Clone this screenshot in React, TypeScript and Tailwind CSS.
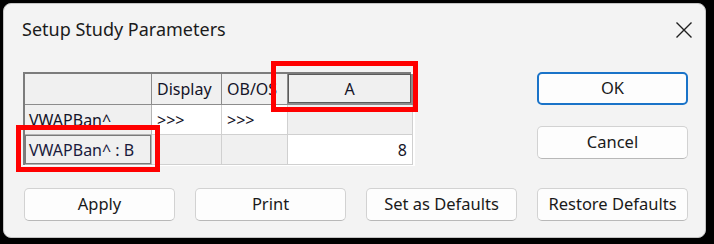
import React from "react";

const font = { fontFamily: '"Noto Sans", "Open Sans", Arial, sans-serif' };

function Btn({ label, primary }: { label: string; primary?: boolean }) {
  return (
    <div
      className={
        "w-[151px] h-[33px] flex items-center justify-center rounded-[5px] bg-[#fdfdfd] text-[16.5px] text-[#1a1a1a] " +
        (primary
          ? "border-2 border-[#1a73c8]"
          : "border border-[#d2d2d2] border-b-[#b8b8b8]")
      }
    >
      {label}
    </div>
  );
}

export default function App() {
  const cell = "border-r border-b flex items-center text-[16px] text-[#141428] overflow-hidden whitespace-nowrap";
  return (
    <div className="w-[714px] h-[244px] bg-black pt-[3px] pl-[3px]" style={font}>
      <div className="relative flex flex-col w-[703px] h-[235px] bg-[#f3f3f3] rounded-[8px] border border-[#c4c4c4]">
        {/* title bar */}
        <div className="flex items-center justify-between h-[50px] pl-[18px] pr-[12px]">
          <span className="text-[18px] text-[#1b1b1b]">Setup Study Parameters</span>
          <svg width="18" height="18" viewBox="0 0 18 18" className="mt-[1px]">
            <path d="M1.5 1.5 L16.5 16.5 M16.5 1.5 L1.5 16.5" stroke="#1f1f1f" strokeWidth="1.4" />
          </svg>
        </div>
        {/* top row */}
        <div className="flex items-start pl-[19px] mt-[18px]">
          <div className="w-[392px] h-[94px] bg-white">
            <div className="grid grid-cols-[127px_70px_66px_125px] grid-rows-[31px_30px_30px] border-l-2 border-t-2 border-[#7c7c7c] w-[388px]">
              {/* header */}
              <div className={cell + " bg-[#f0f0f0] border-[#8c8c8c]"}></div>
              <div className={cell + " bg-[#f0f0f0] border-[#8c8c8c] pl-[5px]"}>Display</div>
              <div className={cell + " bg-[#f0f0f0] border-[#8c8c8c] pl-[5px]"}>OB/OS</div>
              <div className={"border-r-2 border-b-2 border-[#8c8c8c] bg-[#f0f0f0] flex items-center justify-center text-[16px] text-[#141428]"}>
                <div className="w-full h-full border border-[#5a5a5a] flex items-center justify-center">A</div>
              </div>
              {/* row 1 */}
              <div className={cell + " bg-[#f0f0f0] border-[#b4b4b4] pl-[4px] text-[#1a1a3c]"}>VWAPBan^</div>
              <div className={cell + " bg-white border-[#d0d0d0] pl-[5px]"}>&gt;&gt;&gt;</div>
              <div className={cell + " bg-white border-[#d0d0d0] pl-[5px]"}>&gt;&gt;&gt;</div>
              <div className={cell + " bg-[#f0f0f0] border-[#d0d0d0]"}></div>
              {/* row 2 */}
              <div className={"border-r border-b border-[#b4b4b4] bg-[#f0f0f0] flex"}>
                <div className="w-full h-full border border-[#7a7a7a] flex items-center pl-[3px] text-[16px] text-[#1a1a3c] whitespace-nowrap">VWAPBan^ : B</div>
              </div>
              <div className={cell + " bg-[#f0f0f0] border-[#d0d0d0]"}></div>
              <div className={cell + " bg-[#f0f0f0] border-[#d0d0d0]"}></div>
              <div className={cell + " bg-white border-[#d0d0d0] justify-end pr-[5px]"}>8</div>
            </div>
          </div>
          <div className="flex flex-col gap-[21px] ml-[122px]">
            <Btn label="OK" primary />
            <Btn label="Cancel" />
          </div>
        </div>
        {/* bottom row */}
        <div className="flex gap-[20px] pl-[20px] mt-[22px]">
          <Btn label="Apply" />
          <Btn label="Print" />
          <Btn label="Set as Defaults" />
          <Btn label="Restore Defaults" />
        </div>
        {/* red highlight boxes */}
        <div className="absolute left-[267px] top-[57px] w-[147px] h-[51px] border-[5px] border-[#ff0000]"></div>
        <div className="absolute left-[12px] top-[121px] w-[144px] h-[47px] border-[5px] border-[#ff0000]"></div>
      </div>
    </div>
  );
}
